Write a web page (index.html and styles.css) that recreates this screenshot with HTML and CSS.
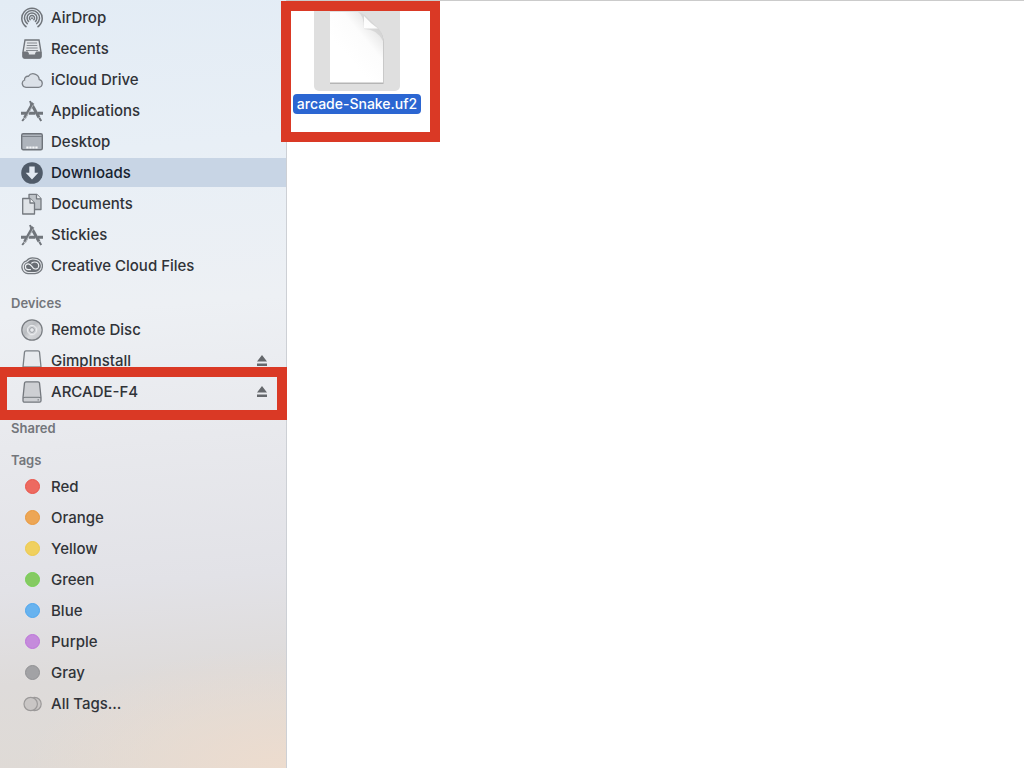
FILE: index.html
```html
<!DOCTYPE html>
<html lang="en">
<head>
<meta charset="utf-8">
<meta name="viewport" content="width=device-width, initial-scale=1">
<title>Downloads</title>
<link rel="stylesheet" href="styles.css">
</head>
<body>
<svg class="defs" aria-hidden="true">
  <defs>
    <linearGradient id="disc" x1="0" y1="0" x2="1" y2="1">
      <stop offset="0" stop-color="#d9dbde"/><stop offset=".4" stop-color="#b9bcc0"/><stop offset=".6" stop-color="#d6d8db"/><stop offset="1" stop-color="#bcbfc3"/>
    </linearGradient>
    <linearGradient id="fold" x1="0" y1="1" x2="1" y2="0">
      <stop offset="0" stop-color="#fff"/><stop offset=".5" stop-color="#fbfbfb"/><stop offset="1" stop-color="#d4d4d4"/>
    </linearGradient>
    <linearGradient id="sheet" x1=".35" y1=".65" x2=".8" y2=".15">
      <stop offset="0" stop-color="#fff"/><stop offset=".6" stop-color="#fcfcfc"/><stop offset="1" stop-color="#e6e6e6"/>
    </linearGradient>
    <symbol id="apps" viewBox="0 0 22 22">
      <g fill="none" stroke="#70757b">
        <path d="M0 13.300H5.500M8 13.300h6M17 13.300H22" stroke-width="3"/>
        <path d="M10 3 18 17.500" stroke-width="3"/>
        <path d="M12 3 3.500 18" stroke-width="3"/>
        <path d="M12.500 4.500 4.500 18.300" stroke="#dfe3e8" stroke-width=".6"/>
        <path d="M10 3.500 9 1M18.300 17.800l1.900 3.200M3.200 18.500l-2 2.500" stroke-width="2"/>
      </g>
    </symbol>
    <symbol id="eject" viewBox="0 0 10 11">
      <path d="M5 0 10 6.500H0ZM0 8.500h10V11H0Z" fill="#65686c"/>
    </symbol>
  </defs>
</svg>
<div class="window">
  <aside class="sidebar">
    <nav class="section" aria-label="Favorites">
      <ul class="list">
        <li><a class="item" href="#airdrop"><svg class="icon" viewBox="0 0 22 22" fill="none" stroke="#70757b" stroke-width="1.500"><path d="M5.500 20A10.200 10.200 0 1 1 16.500 20M6.700 17.200A7.500 7.500 0 1 1 15.300 17.200M8 14.800A4.900 4.900 0 1 1 14 14.800M9.600 13.100A2.500 2.500 0 1 1 12.400 13.100"/><circle cx="11" cy="11.300" r="1" fill="#70757b" stroke="none"/></svg><span>AirDrop</span></a></li>
        <li><a class="item" href="#recents"><svg class="icon" viewBox="0 0 22 22"><path d="M4 2h14l2 12v4.500a1.500 1.500 0 0 1-1.500 1.500h-15A1.500 1.500 0 0 1 2 18.500V14Z" fill="#e2e6ea" stroke="#70757b" stroke-width="1.400"/><path d="M6 5h10M5.700 7.500h10.600M5.400 10h11.200M5 12.500h12" stroke="#858a90" stroke-width="1.100"/><path d="M2 14h4.500c1 0 .8 3 2 3h5c1.200 0 1-3 2-3H20v4.500a1.500 1.500 0 0 1-1.500 1.500h-15A1.500 1.500 0 0 1 2 18.500Z" fill="#70757b" stroke="#70757b"/></svg><span>Recents</span></a></li>
        <li><a class="item" href="#icloud"><svg class="icon" viewBox="0 0 22 22"><path d="M5 18.300h12.500A3.900 3.900 0 0 0 18.200 10.600 6 6 0 0 0 7.300 7.300 3.200 3.200 0 0 0 3.600 11 3.800 3.800 0 0 0 5 18.300Z" fill="#dbe1e8" stroke="#7c8187" stroke-width="1.300"/></svg><span>iCloud Drive</span></a></li>
        <li><a class="item" href="#applications"><svg class="icon"><use href="#apps"/></svg><span>Applications</span></a></li>
        <li><a class="item" href="#desktop"><svg class="icon" viewBox="0 0 22 22"><rect x=".7" y="2.700" width="20.600" height="16" rx="1.500" fill="#aeb4bc" stroke="#6f747b" stroke-width="1.400"/><path d="M1 5.500h20" stroke="#7c8289"/><path d="M5.300 16.500h2.300M8.300 16.500h2.300M11.300 16.500h2.300M14.300 16.500h2.300" stroke="#f5f7f9" stroke-width="2"/></svg><span>Desktop</span></a></li>
        <li><a class="item current" href="#downloads" aria-current="page"><svg class="icon" viewBox="0 0 22 22"><circle cx="11" cy="11" r="10.800" fill="#505b69"/><path d="M8.300 4.500h5.400v6.300h3.600L11 17.600 4.700 10.800h3.600Z" fill="#e2e9f2"/></svg><span>Downloads</span></a></li>
        <li><a class="item" href="#documents"><svg class="icon" viewBox="0 0 22 22" stroke="#74797f" stroke-width="1.300" stroke-linejoin="round"><path d="M8 1.300h7.500l4.500 4.500V16.500H8Z" fill="#bfc4c9"/><path d="M15.500 1.300v4.500H20" fill="#eef1f4"/><path d="M1.700 5.500H9l4.500 4.500v11H1.700Z" fill="#dfe3e7"/><path d="M9 5.500V10h4.500" fill="#f4f6f8"/></svg><span>Documents</span></a></li>
        <li><a class="item" href="#stickies"><svg class="icon"><use href="#apps"/></svg><span>Stickies</span></a></li>
        <li><a class="item" href="#creative-cloud"><svg class="icon" viewBox="0 0 22 22"><path d="M7 18.600A6.500 6.500 0 0 1 5.500 5.900 8 8 0 0 1 13.500 3.200 7.700 7.700 0 0 1 14 18.600Z" fill="#e3e6ea" stroke="#74797f" stroke-width="1.300"/><path d="M7 17A5 5 0 0 1 6.500 7.300 7 7 0 0 1 13.500 4.800 6.100 6.100 0 0 1 14 17Z" fill="#696e74"/><g fill="none" stroke="#eef1f4" stroke-width="1.200" stroke-linecap="round"><path d="M9.500 14.600H7.300a2.900 2.900 0 0 1 0-5.800C9.500 8.800 10.500 11 12 12.800c1.200 1.500 3.800 1.700 5 .2 1.800-2.400.3-6-3.200-6-1.400 0-2.300.4-3 1"/></g></svg><span>Creative Cloud Files</span></a></li>
      </ul>
    </nav>
    <section class="section">
      <h2 class="heading">Devices</h2>
      <ul class="list devices">
        <li><a class="item" href="#remote-disc"><svg class="icon" viewBox="0 0 22 22"><circle cx="11" cy="11" r="10.200" fill="url(#disc)" stroke="#797d82" stroke-width="1.200"/><circle cx="11" cy="11" r="4.700" fill="#d3d5d9" stroke="#eceef0"/><circle cx="11" cy="11" r="2.400" fill="#e8eaed" stroke="#989ca1"/></svg><span>Remote Disc</span></a></li>
        <li class="device"><a class="item" href="#gimpinstall"><svg class="icon" viewBox="0 0 22 22" stroke="#7b8086" stroke-width="1.300"><path d="M5 .8h12a1.500 1.500 0 0 1 1.500 1.300L20 17v2.500a1.500 1.500 0 0 1-1.500 1.500h-15A1.500 1.500 0 0 1 2 19.500V17L3.500 2.100A1.500 1.500 0 0 1 5 .8Z" fill="#e7eaee"/><path d="M2 17h18" fill="none"/></svg><span>GimpInstall</span></a><button class="eject" type="button" aria-label="Eject GimpInstall"><svg class="eject-icon"><use href="#eject"/></svg></button></li>
        <li class="device marked"><a class="item" href="#arcade-f4"><svg class="icon" viewBox="0 0 22 22" stroke="#74787e" stroke-width="1.300"><path d="M5 .8h12a1.500 1.500 0 0 1 1.500 1.300L20 16.500v3.200a1.500 1.500 0 0 1-1.500 1.500h-15A1.500 1.500 0 0 1 2 19.700V16.500L3.500 2.100A1.500 1.500 0 0 1 5 .8Z" fill="#cdcfd3"/><path d="M2 17q1-.7 2-.7h14q1 0 2 .7" fill="none" stroke-width="1"/><path d="M16.500 18.900h1.500" stroke-width="1"/></svg><span>ARCADE-F4</span></a><button class="eject" type="button" aria-label="Eject ARCADE-F4"><svg class="eject-icon"><use href="#eject"/></svg></button></li>
      </ul>
    </section>
    <section class="section shared">
      <h2 class="heading">Shared</h2>
    </section>
    <section class="section">
      <h2 class="heading">Tags</h2>
      <ul class="list">
        <li><a class="item" href="#red"><span class="tag red"></span><span>Red</span></a></li>
        <li><a class="item" href="#orange"><span class="tag orange"></span><span>Orange</span></a></li>
        <li><a class="item" href="#yellow"><span class="tag yellow"></span><span>Yellow</span></a></li>
        <li><a class="item" href="#green"><span class="tag green"></span><span>Green</span></a></li>
        <li><a class="item" href="#blue"><span class="tag blue"></span><span>Blue</span></a></li>
        <li><a class="item" href="#purple"><span class="tag purple"></span><span>Purple</span></a></li>
        <li><a class="item" href="#gray"><span class="tag gray"></span><span>Gray</span></a></li>
        <li><a class="item" href="#all-tags"><svg class="icon" viewBox="0 0 22 22" fill="#c9c6c5" stroke="#9b9999" stroke-width="1.200"><circle cx="13.500" cy="11" r="6.700"/><circle cx="9.700" cy="11" r="6.700"/></svg><span>All Tags...</span></a></li>
      </ul>
    </section>
  </aside>
  <main class="content">
    <figure class="file">
      <div class="thumb">
        <svg class="page" viewBox="0 0 56 74">
          <path d="M1 1.500H30Q34 2 38 6L50 18Q54.500 23 54.500 30V72H1Z" fill="#9a9a9a" opacity=".6"/>
          <path d="M1 0H29Q34 1 38 5L50 17Q54 22 54 29V70.500H1Z" fill="url(#sheet)"/>
          <path d="M29 0Q35 3 35 17Q48 17 54 29Q54 22 50 17L38 5Q34 1 29 0Z" fill="#c4c4c4" opacity=".5"/>
          <path d="M35 4V16.500H49Q42 12 35 4Z" fill="url(#fold)"/>
        </svg>
      </div>
      <figcaption class="name">arcade-Snake.uf2</figcaption>
    </figure>
  </main>
</div>
</body>
</html>
```
FILE: styles.css
```css
* {
  box-sizing: border-box;
}

body {
  margin: 0;
  background: #fff;
  color: #303338;
  font-family: Inter, "Liberation Sans", sans-serif;
  font-size: 15px;
  font-weight: 500;
}

.defs {
  position: absolute;
  width: 0;
  height: 0;
}

.window {
  display: flex;
  min-height: 100vh;
}

.sidebar {
  flex: 0 0 287px;
  padding-top: 3px;
  border-right: 1px solid #cdd0d5;
  background:
    radial-gradient(ellipse 260px 120px at 100% 100%, #eddcce, rgba(237, 220, 206, 0)),
    linear-gradient(176deg, #e3ecf5 0%, #e8eff6 20%, #edf0f4 40%, #e8e9ed 57%, #e2e2e7 75%, #dedbda 87%, #dfdad5 100%);
}

.list {
  display: flex;
  flex-direction: column;
  gap: 2px;
  margin: 0;
  padding: 0 0 3px;
  list-style: none;
}

.devices {
  padding-bottom: 2px;
}

.heading {
  margin: 0;
  padding: 10px 11px 2px;
  color: #73767b;
  font-size: 13px;
  font-weight: 600;
  line-height: 20px;
}

.item {
  display: flex;
  flex: 1;
  align-items: center;
  gap: 8px;
  height: 29px;
  padding-left: 21px;
  color: inherit;
  text-decoration: none;
}

.current {
  background: #c8d5e5;
  color: #17222f;
}

.icon {
  flex: none;
  width: 22px;
  height: 22px;
}

.device {
  display: flex;
  align-items: center;
  padding-right: 19px;
}

.eject {
  display: flex;
  padding: 0;
  border: 0;
  background: none;
}

.eject-icon {
  width: 10px;
  height: 11px;
}

.marked {
  position: relative;
}

.marked::after {
  content: "";
  position: absolute;
  inset: -10px -1px -14px -3px;
  border: 10px solid #da3925;
  pointer-events: none;
}

.tag {
  flex: none;
  width: 15px;
  height: 15px;
  margin: 0 3px 0 4px;
  border: 1px solid;
  border-radius: 50%;
}

.red {
  background: #ed6a60;
  border-color: #ea5349;
}

.orange {
  background: #eda655;
  border-color: #ea983c;
}

.yellow {
  background: #f0d05f;
  border-color: #edc94a;
}

.green {
  background: #85ca62;
  border-color: #74d052;
}

.blue {
  background: #68b3ef;
  border-color: #4ea6ee;
}

.purple {
  background: #c58bdc;
  border-color: #bd75da;
}

.gray {
  background: #a2a2a5;
  border-color: #919194;
}

.content {
  flex: 1;
  min-width: 0;
  padding: 5px 6px;
  border-top: 1px solid #cbcbcb;
}

.file {
  position: relative;
  display: flex;
  flex-direction: column;
  align-items: center;
  gap: 3px;
  width: 128px;
  margin: 0;
}

.file::after {
  content: "";
  position: absolute;
  inset: -5px -19px -28px -12px;
  border: 10px solid #da3925;
  pointer-events: none;
}

.thumb {
  display: flex;
  justify-content: center;
  padding: 6px 15px 5px;
  border-radius: 5px;
  background: #dfdfdf;
}

.page {
  width: 56px;
  height: 74px;
}

.name {
  padding: 0 4px;
  border-radius: 4px;
  background: #2b66d2;
  color: #fff;
  font-size: 14px;
  line-height: 20px;
  white-space: nowrap;
}
```
